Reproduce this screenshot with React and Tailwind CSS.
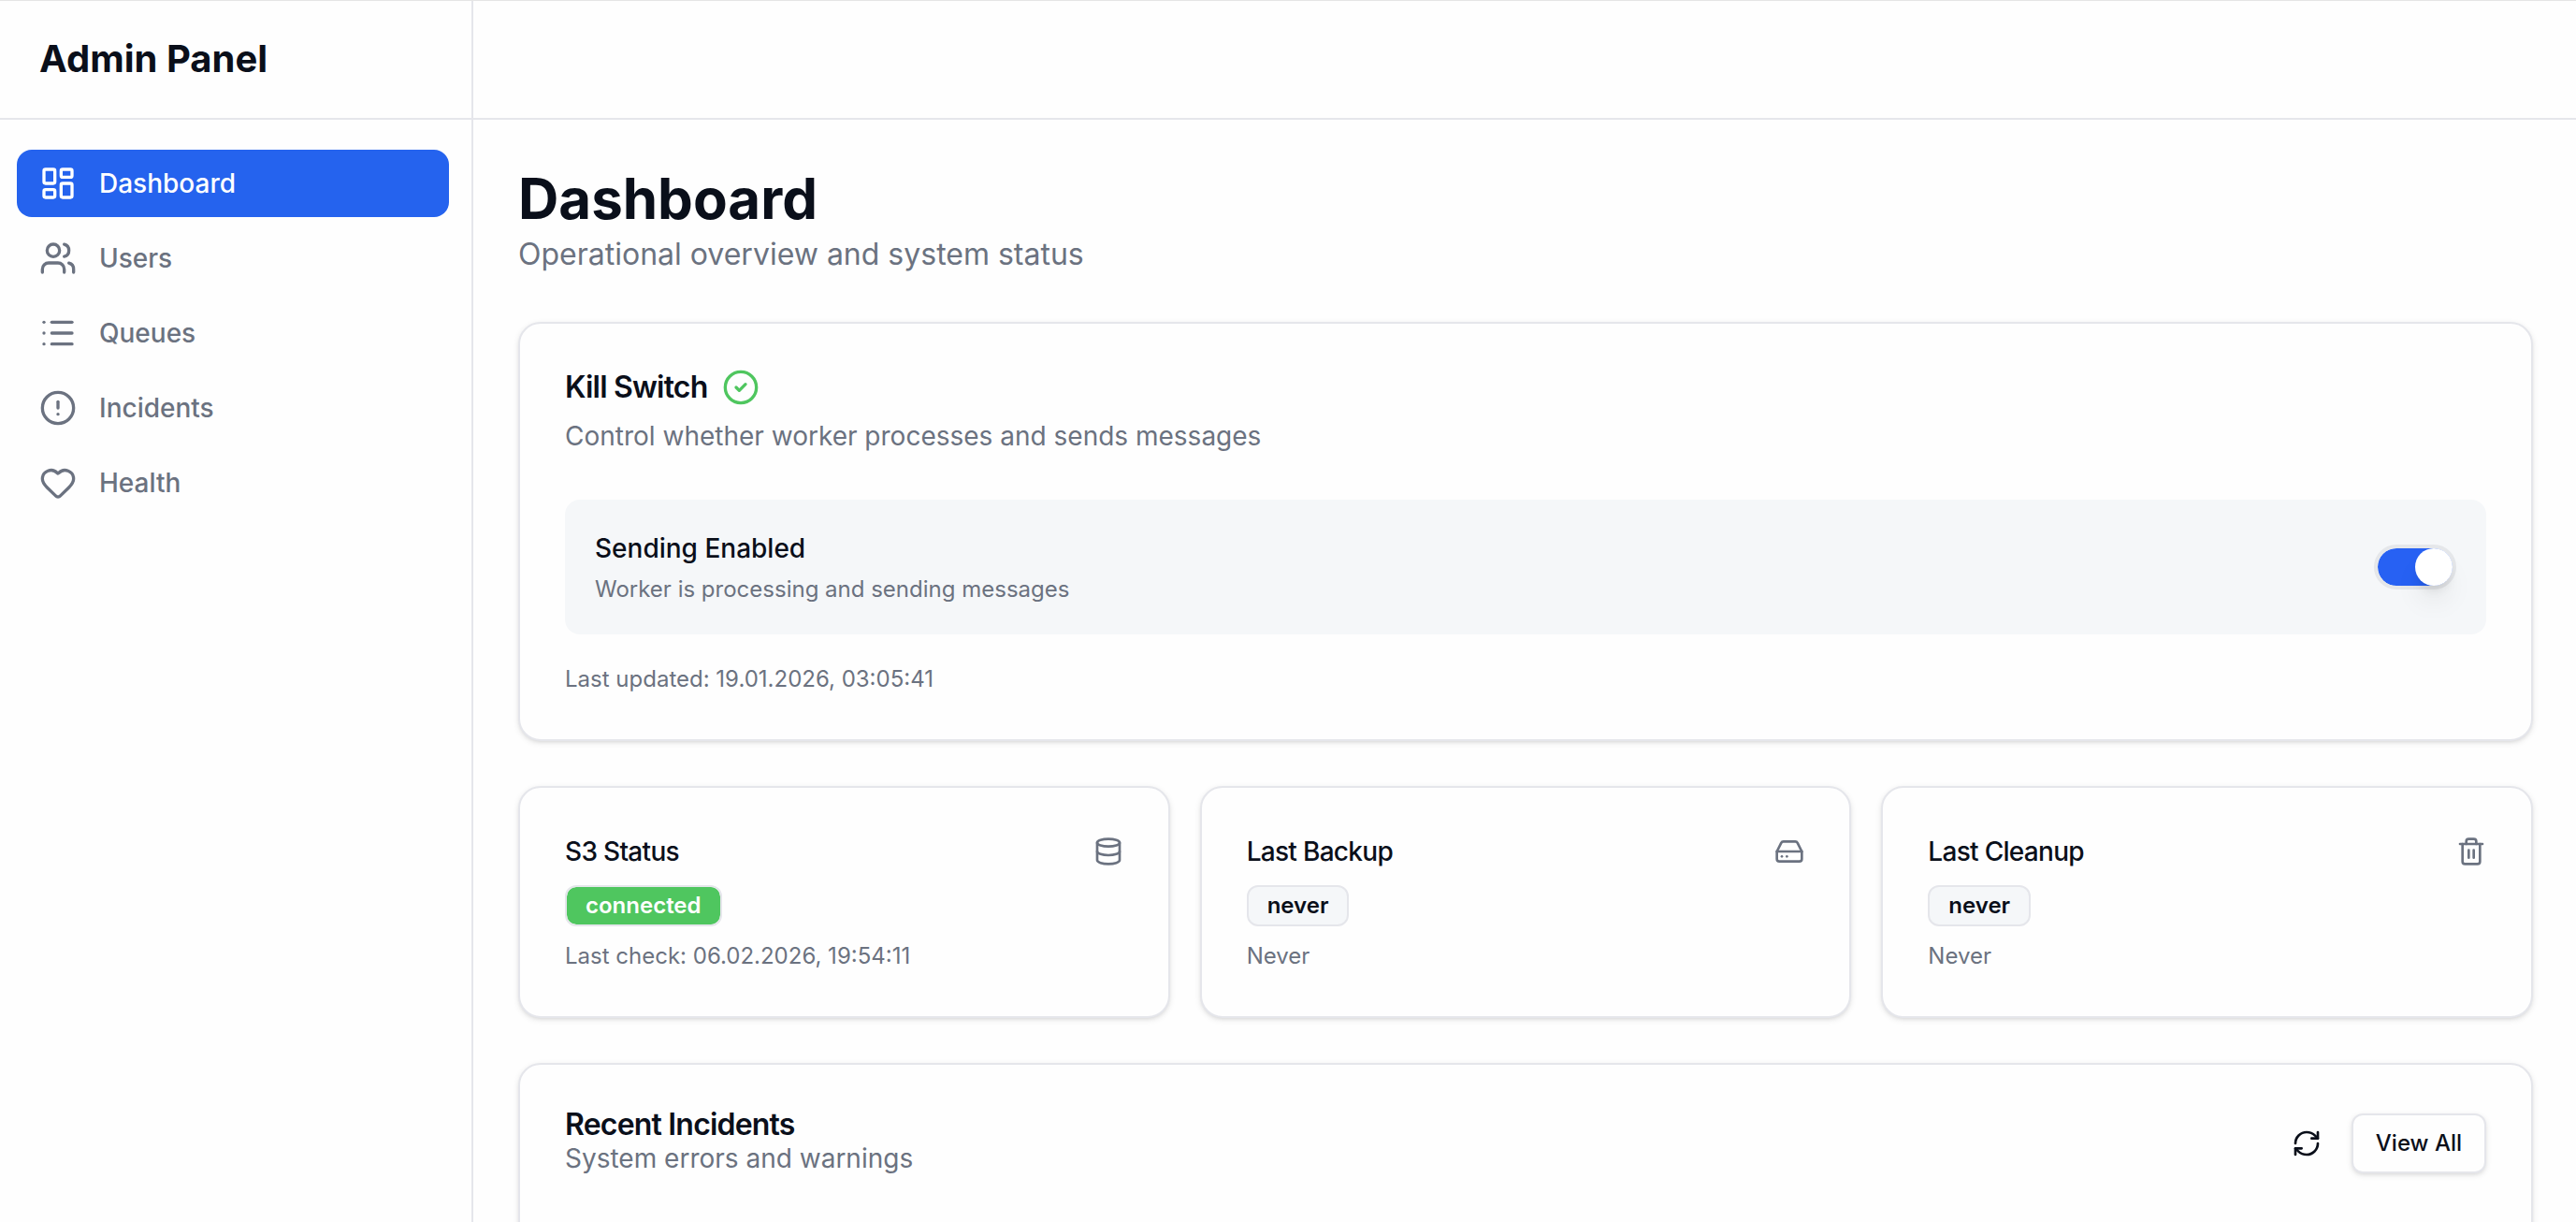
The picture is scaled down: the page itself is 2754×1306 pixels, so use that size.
import { CircleAlert, CircleCheck, Database, HardDrive, Heart, LayoutDashboard, List, RefreshCw, Trash2, Users } from 'lucide-react'

const navItems = [
  { label: 'Dashboard', icon: LayoutDashboard, active: true },
  { label: 'Users', icon: Users },
  { label: 'Queues', icon: List },
  { label: 'Incidents', icon: CircleAlert },
  { label: 'Health', icon: Heart },
]

const stats = [
  { title: 'S3 Status', icon: Database, badge: 'connected', ok: true, note: 'Last check: 06.02.2026, 19:54:11' },
  { title: 'Last Backup', icon: HardDrive, badge: 'never', note: 'Never' },
  { title: 'Last Cleanup', icon: Trash2, badge: 'never', note: 'Never' },
]

function Card({ className = '', children }) {
  return (
    <section
      className={`rounded-[24px] border-2 border-[#e5e6eb] bg-[#fefefe] p-12 shadow-[0_2px_6px_rgba(0,0,0,0.1),0_2px_4px_-2px_rgba(0,0,0,0.1)] ${className}`}
    >
      {children}
    </section>
  )
}

function NavItem({ label, icon: Icon, active }) {
  return (
    <a
      className={`flex h-18 items-center gap-6 rounded-2xl px-6 text-[28px] font-medium ${
        active ? 'bg-[#2563ee] text-white' : 'text-[#6b7280]'
      }`}
    >
      <Icon className="size-10" />
      <span>{label}</span>
    </a>
  )
}

function Sidebar() {
  return (
    <aside className="w-[506px] shrink-0 border-r-2 border-[#e5e6eb]">
      <div className="flex h-32 items-center border-b-2 border-[#e5e6eb] pl-[42px]">
        <span className="text-[40px] leading-[56px] font-bold">Admin Panel</span>
      </div>
      <nav className="flex flex-col gap-2 pt-8 pr-6 pl-[18px]">
        {navItems.map((item) => (
          <NavItem key={item.label} {...item} />
        ))}
      </nav>
    </aside>
  )
}

function Toggle() {
  return (
    <button className="flex h-12 w-22 justify-end rounded-full border-4 border-[#e5e7ea] bg-[#2761f3] bg-clip-padding">
      <span className="size-10 rounded-full bg-white shadow-[0_20px_30px_-6px_rgba(0,0,0,0.1),0_8px_12px_-4px_rgba(0,0,0,0.1)]" />
    </button>
  )
}

function KillSwitch() {
  return (
    <Card>
      <div className="flex items-center gap-4">
        <h2 className="text-[32px] leading-10 font-semibold tracking-tight">Kill Switch</h2>
        <CircleCheck className="size-10 text-[#4fc65f]" />
      </div>
      <p className="mt-3 text-[28px] leading-10 text-[#6b7280]">
        Control whether worker processes and sends messages
      </p>
      <div className="mt-12 flex items-center justify-between rounded-2xl bg-[#f5f7f9] p-8">
        <div>
          <p className="text-[28px] leading-10 font-medium">Sending Enabled</p>
          <p className="mt-2 text-2xl leading-8 text-[#6b7280]">Worker is processing and sending messages</p>
        </div>
        <Toggle />
      </div>
      <p className="mt-8 text-2xl leading-8 text-[#6b7280]">Last updated: 19.01.2026, 03:05:41</p>
    </Card>
  )
}

function StatCard({ title, icon: Icon, badge, ok, note }) {
  return (
    <Card>
      <div className="flex h-10 items-center justify-between">
        <h3 className="text-[28px] leading-10 font-medium tracking-tight">{title}</h3>
        <Icon className="size-8 text-[#6b7280]" />
      </div>
      <div className="mt-4 flex">
        <span
          className={`rounded-xl border-2 border-[#e5e6eb] px-5 py-1 text-2xl leading-8 font-semibold ${
            ok ? 'bg-[#4fc65f] bg-clip-padding text-white' : 'bg-[#f5f7f9]'
          }`}
        >
          {badge}
        </span>
      </div>
      <p className="mt-4 text-2xl leading-8 text-[#6b7280]">{note}</p>
    </Card>
  )
}

function RecentIncidents() {
  return (
    <Card className="h-[600px]">
      <div className="flex items-center justify-between">
        <div>
          <h2 className="text-[32px] leading-8 font-semibold tracking-tight">Recent Incidents</h2>
          <p className="text-[28px] leading-10 text-[#6b7280]">System errors and warnings</p>
        </div>
        <div className="flex items-center gap-4">
          <button className="flex size-16 items-center justify-center">
            <RefreshCw className="size-8" />
          </button>
          <button className="h-16 rounded-xl border-2 border-[#e5e6eb] bg-[#fefefe] px-6 text-2xl font-medium shadow-[0_2px_6px_rgba(0,0,0,0.1),0_2px_4px_-2px_rgba(0,0,0,0.1)]">
            View All
          </button>
        </div>
      </div>
    </Card>
  )
}

export default function App() {
  return (
    <div className="relative flex h-[1306px] w-[2754px] overflow-hidden bg-[#fefefe] font-['Inter',sans-serif] text-[#0a0f1a]">
      <Sidebar />
      <div className="flex min-w-0 flex-1 flex-col">
        <header className="h-32 shrink-0 border-b-2 border-[#e5e6eb]" />
        <main className="flex flex-col gap-12 pt-12 pr-[46px] pl-12">
          <div>
            <h1 className="text-[60px] leading-[72px] font-bold">Dashboard</h1>
            <p className="text-[32px] leading-12 text-[#6b7280]">Operational overview and system status</p>
          </div>
          <KillSwitch />
          <div className="grid grid-cols-3 gap-8">
            {stats.map((stat) => (
              <StatCard key={stat.title} {...stat} />
            ))}
          </div>
          <RecentIncidents />
        </main>
      </div>
      <div className="absolute inset-x-0 top-0 h-px bg-[#e5e5e5]" />
    </div>
  )
}
